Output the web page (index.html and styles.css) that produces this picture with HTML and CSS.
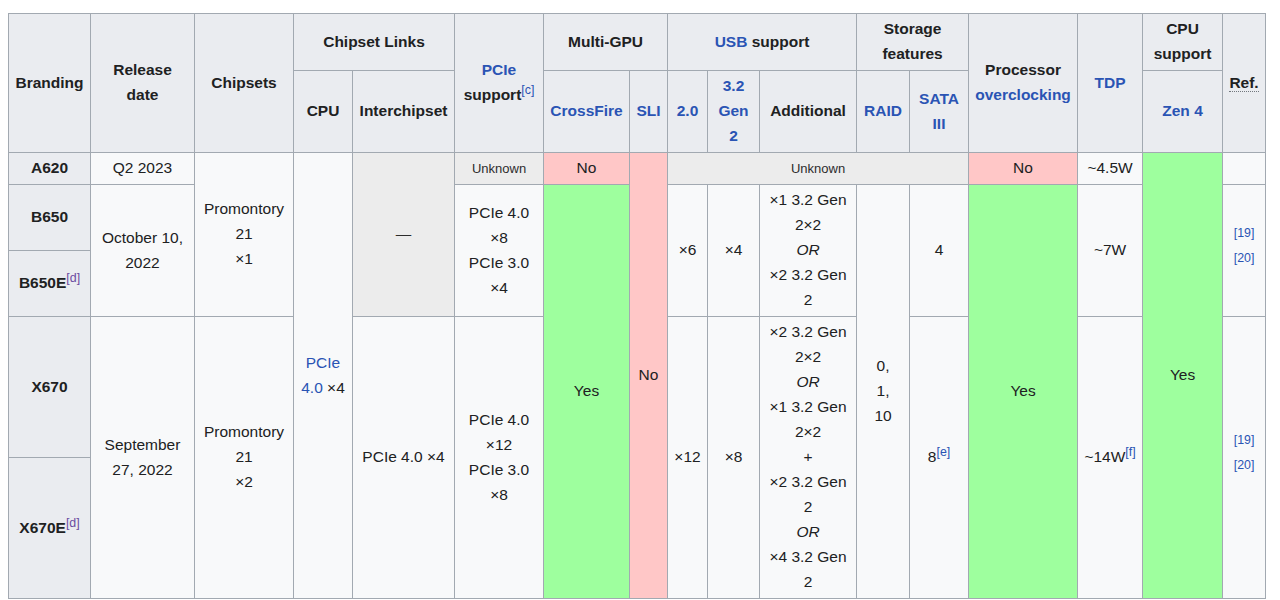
FILE: index.html
```html
<!DOCTYPE html>
<html lang="en">
<head>
<meta charset="utf-8">
<title>AM5 chipsets</title>
<link rel="stylesheet" href="styles.css">
</head>
<body>
<table class="wikitable">
  <colgroup>
    <col class="w82"><col class="w104"><col class="w99"><col class="w59"><col class="w102">
    <col class="w89"><col class="w86"><col class="w38"><col class="w40"><col class="w52">
    <col class="w97"><col class="w53"><col class="w59"><col class="w109"><col class="w65">
    <col class="w80"><col class="w43">
  </colgroup>
  <thead>
    <tr class="hr1">
      <th rowspan="2">Branding</th>
      <th rowspan="2">Release<br>date</th>
      <th rowspan="2">Chipsets</th>
      <th colspan="2">Chipset Links</th>
      <th rowspan="2"><a href="#">PCIe</a><br>support<sup class="ref"><a href="#">[c]</a></sup></th>
      <th colspan="2">Multi-GPU</th>
      <th colspan="3"><a href="#">USB</a> support</th>
      <th colspan="2">Storage<br>features</th>
      <th rowspan="2">Processor<br><a href="#">overclocking</a></th>
      <th rowspan="2"><a href="#">TDP</a></th>
      <th>CPU<br>support</th>
      <th rowspan="2"><span class="abbr">Ref.</span></th>
    </tr>
    <tr class="hr2">
      <th>CPU</th>
      <th>Interchipset</th>
      <th><a href="#">CrossFire</a></th>
      <th><a href="#">SLI</a></th>
      <th><a href="#">2.0</a></th>
      <th><a href="#">3.2<br>Gen<br>2</a></th>
      <th>Additional</th>
      <th><a href="#">RAID</a></th>
      <th><a href="#">SATA<br>III</a></th>
      <th><a href="#">Zen 4</a></th>
    </tr>
  </thead>
  <tbody>
    <tr class="r-a620">
      <th>A620</th>
      <td>Q2 2023</td>
      <td rowspan="3">Promontory<br>21<br>×1</td>
      <td rowspan="5"><a href="#">PCIe<br>4.0</a> ×4</td>
      <td rowspan="3" class="na">—</td>
      <td class="unk">Unknown</td>
      <td class="no">No</td>
      <td rowspan="5" class="no">No</td>
      <td colspan="5" class="unk">Unknown</td>
      <td class="no">No</td>
      <td>~4.5W</td>
      <td rowspan="5" class="yes">Yes</td>
      <td></td>
    </tr>
    <tr class="r-b650">
      <th>B650</th>
      <td rowspan="2">October 10,<br>2022</td>
      <td rowspan="2">PCIe 4.0<br>×8<br>PCIe 3.0<br>×4</td>
      <td rowspan="4" class="yes">Yes</td>
      <td rowspan="2">×6</td>
      <td rowspan="2">×4</td>
      <td rowspan="2">×1 3.2 Gen<br>2×2<br><i>OR</i><br>×2 3.2 Gen<br>2</td>
      <td rowspan="4">0,<br>1,<br>10</td>
      <td rowspan="2">4</td>
      <td rowspan="4" class="yes">Yes</td>
      <td rowspan="2">~7W</td>
      <td rowspan="2"><sup class="ref"><a href="#">[19]</a></sup><br><sup class="ref"><a href="#">[20]</a></sup></td>
    </tr>
    <tr class="r-b650e">
      <th>B650E<sup class="ref"><a href="#" class="visited">[d]</a></sup></th>
    </tr>
    <tr class="r-x670">
      <th>X670</th>
      <td rowspan="2">September<br>27, 2022</td>
      <td rowspan="2">Promontory<br>21<br>×2</td>
      <td rowspan="2">PCIe 4.0 ×4</td>
      <td rowspan="2">PCIe 4.0<br>×12<br>PCIe 3.0<br>×8</td>
      <td rowspan="2">×12</td>
      <td rowspan="2">×8</td>
      <td rowspan="2">×2 3.2 Gen<br>2×2<br><i>OR</i><br>×1 3.2 Gen<br>2×2<br>+<br>×2 3.2 Gen<br>2<br><i>OR</i><br>×4 3.2 Gen<br>2</td>
      <td rowspan="2">8<sup class="ref"><a href="#">[e]</a></sup></td>
      <td rowspan="2">~14W<sup class="ref"><a href="#">[f]</a></sup></td>
      <td rowspan="2"><sup class="ref"><a href="#">[19]</a></sup><br><sup class="ref"><a href="#">[20]</a></sup></td>
    </tr>
    <tr class="r-x670e">
      <th>X670E<sup class="ref"><a href="#" class="visited">[d]</a></sup></th>
    </tr>
  </tbody>
</table>
</body>
</html>
```

FILE: styles.css
```css
html, body {
  margin: 0;
  padding: 0;
  background: #ffffff;
}

body {
  font-family: "Liberation Sans", Arial, sans-serif;
  font-size: 15.5px;
  line-height: 1.61;
  color: #202122;
}

.wikitable {
  margin: 13px 0 0 8px;
  width: 1257px;
  table-layout: fixed;
  border-collapse: collapse;
  background: #f8f9fa;
  color: #202122;
  border: 1px solid #a2a9b1;
}

.wikitable th,
.wikitable td {
  border: 1px solid #a2a9b1;
  padding: 0.2em 0.4em;
  text-align: center;
  vertical-align: middle;
  white-space: nowrap;
}

.wikitable th {
  background: #eaecf0;
  font-weight: bold;
}

.wikitable a {
  color: #2a54b4;
  text-decoration: none;
}

.wikitable a.visited {
  color: #6b4ba1;
}

.ref {
  font-size: 0.8em;
  line-height: 1;
  vertical-align: super;
  font-weight: normal;
}

.abbr {
  border-bottom: 1px dotted #72777d;
}

.yes {
  background: #9eff9e;
  color: #202122;
}

.no {
  background: #ffc7c7;
  color: #202122;
}

.wikitable td.unk {
  background: #ececec;
  color: #2c2c2c;
  font-size: 0.84em;
  line-height: 1.93;
}

.na {
  background: #ececec;
  color: #2c2c2c;
}

.w82 { width: 82px; }
.w104 { width: 104px; }
.w99 { width: 99px; }
.w59 { width: 59px; }
.w102 { width: 102px; }
.w89 { width: 89px; }
.w86 { width: 86px; }
.w38 { width: 38px; }
.w40 { width: 40px; }
.w52 { width: 52px; }
.w97 { width: 97px; }
.w53 { width: 53px; }
.w109 { width: 109px; }
.w65 { width: 65px; }
.w80 { width: 80px; }
.w43 { width: 43px; }
```
